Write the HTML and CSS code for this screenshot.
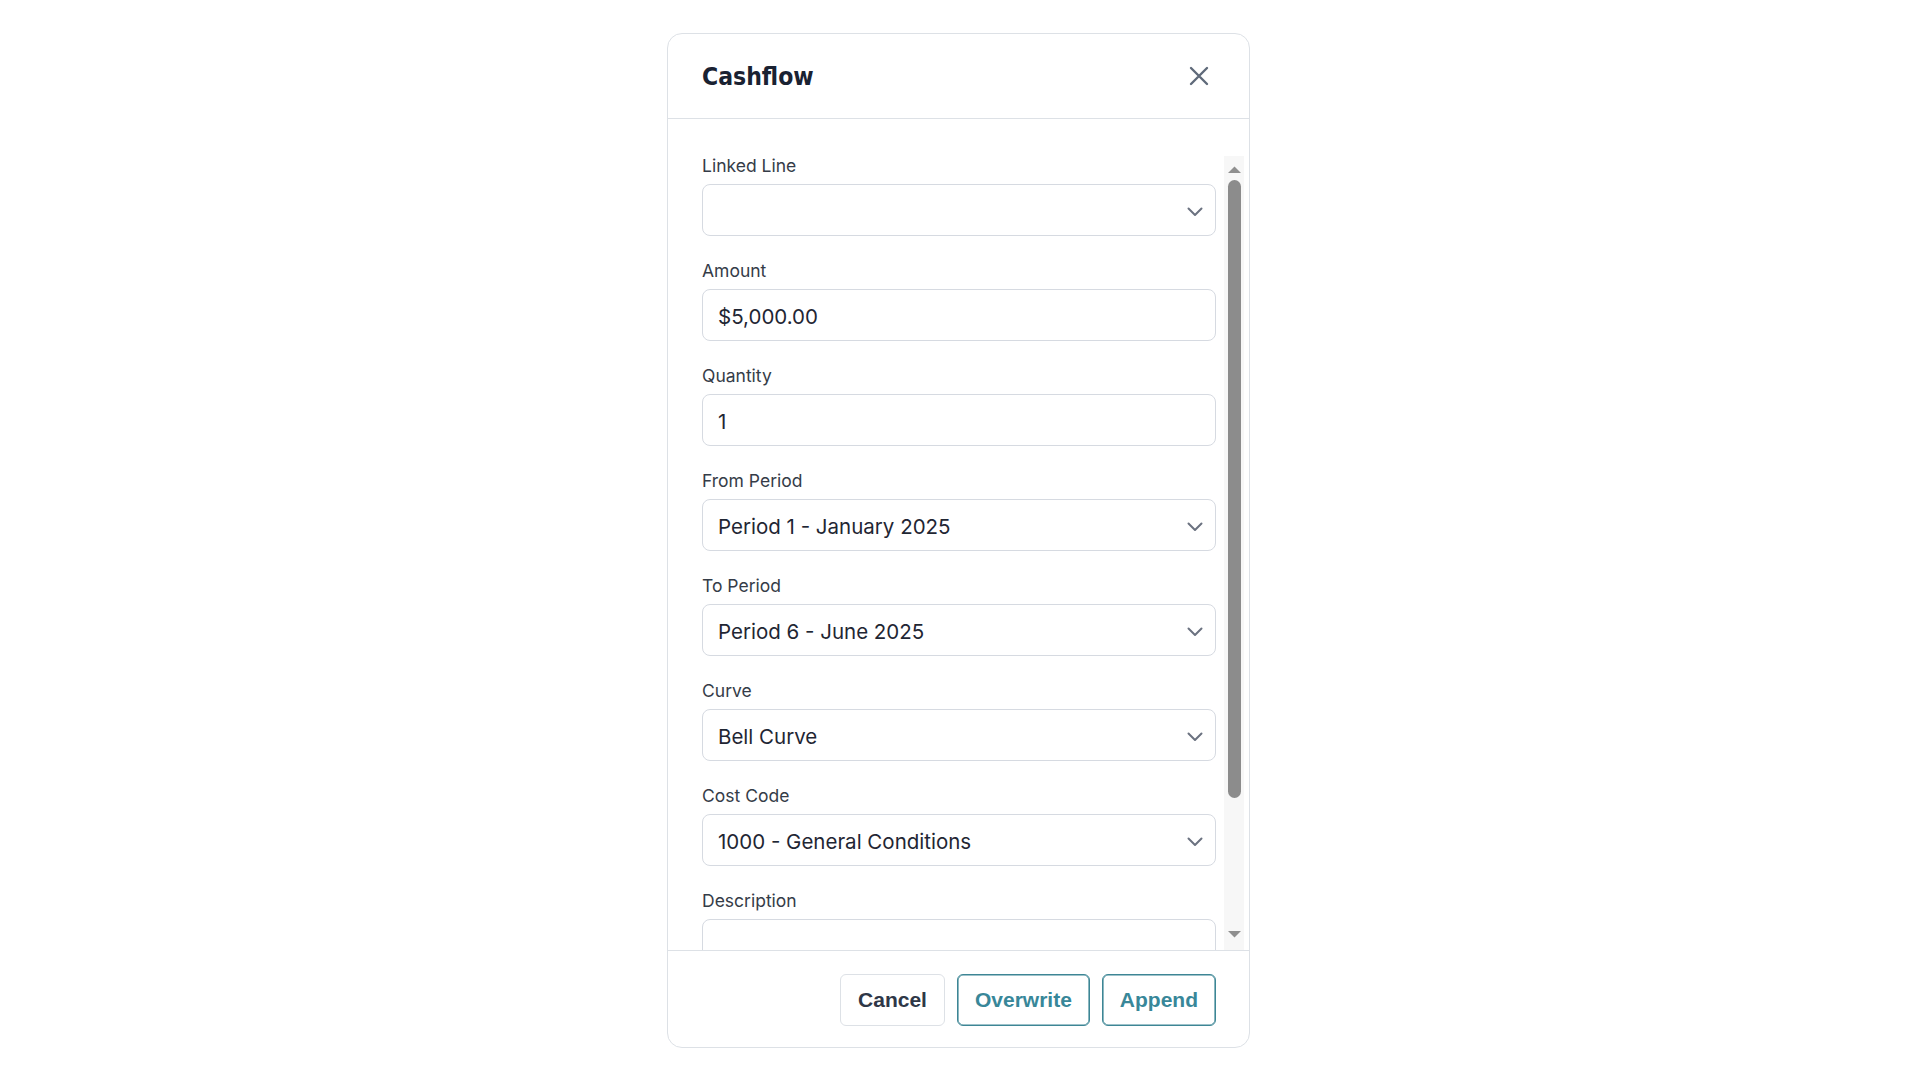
FILE: index.html
```html
<!DOCTYPE html>
<html lang="en">
<head>
<meta charset="utf-8">
<title>Cashflow</title>
<link rel="stylesheet" href="styles.css">
</head>
<body>
<div class="dialog">
  <div class="header">
    <h2 class="title">Cashflow</h2>
    <button class="close" aria-label="Close">
      <svg width="20" height="20" viewBox="0 0 20 20"><path d="M2 2 L18 18 M18 2 L2 18" stroke="#5f6a7a" stroke-width="2.4" stroke-linecap="round" fill="none"/></svg>
    </button>
  </div>
  <div class="body">
    <div class="scroll">
      <div class="field">
        <label class="label">Linked Line</label>
        <div class="control select"><span class="value"></span><svg class="chev" width="16" height="10" viewBox="0 0 16 10"><path d="M1.5 1.5 L8 8 L14.5 1.5" stroke="#6b7280" stroke-width="2" fill="none" stroke-linecap="round" stroke-linejoin="round"/></svg></div>
      </div>
      <div class="field">
        <label class="label">Amount</label>
        <div class="control"><span class="value">$5,000.00</span></div>
      </div>
      <div class="field">
        <label class="label">Quantity</label>
        <div class="control"><span class="value">1</span></div>
      </div>
      <div class="field">
        <label class="label">From Period</label>
        <div class="control select"><span class="value">Period 1 - January 2025</span><svg class="chev" width="16" height="10" viewBox="0 0 16 10"><path d="M1.5 1.5 L8 8 L14.5 1.5" stroke="#6b7280" stroke-width="2" fill="none" stroke-linecap="round" stroke-linejoin="round"/></svg></div>
      </div>
      <div class="field">
        <label class="label">To Period</label>
        <div class="control select"><span class="value">Period 6 - June 2025</span><svg class="chev" width="16" height="10" viewBox="0 0 16 10"><path d="M1.5 1.5 L8 8 L14.5 1.5" stroke="#6b7280" stroke-width="2" fill="none" stroke-linecap="round" stroke-linejoin="round"/></svg></div>
      </div>
      <div class="field">
        <label class="label">Curve</label>
        <div class="control select"><span class="value">Bell Curve</span><svg class="chev" width="16" height="10" viewBox="0 0 16 10"><path d="M1.5 1.5 L8 8 L14.5 1.5" stroke="#6b7280" stroke-width="2" fill="none" stroke-linecap="round" stroke-linejoin="round"/></svg></div>
      </div>
      <div class="field">
        <label class="label">Cost Code</label>
        <div class="control select"><span class="value">1000 - General Conditions</span><svg class="chev" width="16" height="10" viewBox="0 0 16 10"><path d="M1.5 1.5 L8 8 L14.5 1.5" stroke="#6b7280" stroke-width="2" fill="none" stroke-linecap="round" stroke-linejoin="round"/></svg></div>
      </div>
      <div class="field">
        <label class="label">Description</label>
        <div class="control textarea"></div>
      </div>
    </div>
    <div class="vscroll" aria-hidden="true">
      <div class="sb-btn sb-up"><svg width="20" height="24" viewBox="0 0 20 24"><path d="M4 17 L17 17 L10.5 10.5 Z" fill="#8f8f8f"/></svg></div>
      <div class="sb-track"><div class="sb-thumb"></div></div>
      <div class="sb-btn sb-down"><svg width="20" height="24" viewBox="0 0 20 24"><path d="M4 5 L17 5 L10.5 11.5 Z" fill="#8f8f8f"/></svg></div>
    </div>
  </div>
  <div class="footer">
    <button class="btn btn-cancel">Cancel</button>
    <button class="btn btn-outline">Overwrite</button>
    <button class="btn btn-outline">Append</button>
  </div>
</div>
</body>
</html>
```
FILE: styles.css
```css
html, body {
  margin: 0;
  padding: 0;
  background: #ffffff;
}

body {
  font-family: Inter, "Noto Sans", sans-serif;
  color: #1f2937;
}

.dialog {
  box-sizing: border-box;
  width: 583px;
  height: 1015px;
  margin: 33px 0 0 667px;
  border: 1px solid #dde1e6;
  border-radius: 15px;
  display: flex;
  flex-direction: column;
  background: #fff;
}

.header {
  box-sizing: border-box;
  height: 85px;
  flex: 0 0 auto;
  border-bottom: 1px solid #dde1e6;
  display: flex;
  align-items: center;
  justify-content: space-between;
  padding: 0 40px 0 34px;
}

.title {
  margin: 0;
  font-family: "DejaVu Sans Condensed", "DejaVu Sans", sans-serif;
  font-stretch: condensed;
  font-weight: bold;
  font-size: 24.5px;
  color: #1a2232;
}

.close {
  border: 0;
  background: none;
  padding: 0;
  width: 20px;
  height: 20px;
  display: flex;
}

.body {
  flex: 1 1 auto;
  min-height: 0;
  padding-top: 37px;
  display: flex;
}

.scroll {
  flex: 1 1 auto;
  overflow: hidden;
  padding: 0 8px 25px 34px;
  display: flex;
  flex-direction: column;
  gap: 25px;
}

.vscroll {
  flex: 0 0 20px;
  margin-right: 5px;
  background: #f7f7f7;
  display: flex;
  flex-direction: column;
}

.sb-btn {
  flex: 0 0 24px;
  height: 24px;
}

.sb-btn svg {
  display: block;
}

.sb-track {
  flex: 1 1 auto;
}

.sb-thumb {
  height: 618px;
  margin: 0 3px 0 4px;
  background: #8c8c8c;
  border-radius: 7px;
}

.field {
  display: flex;
  flex-direction: column;
  flex: 0 0 auto;
}

.label {
  font-size: 17.5px;
  line-height: 20px;
  color: #353c48;
  margin-bottom: 8px;
}

.control {
  box-sizing: border-box;
  height: 52px;
  border: 1px solid #d6dae1;
  border-radius: 8px;
  display: flex;
  align-items: center;
  justify-content: space-between;
  padding: 0 11px 0 15px;
  background: #fff;
}

.value {
  font-size: 20.5px;
  color: #1f2633;
  white-space: nowrap;
  padding-top: 2px;
}

.chev {
  flex: 0 0 auto;
  margin-top: 4px;
  margin-right: 1px;
}

.textarea {
  height: 168px;
  flex: 0 0 auto;
}

.footer {
  flex: 0 0 auto;
  border-top: 1px solid #dde1e6;
  padding: 23px 33px 21px 0;
  display: flex;
  justify-content: flex-end;
  gap: 12px;
}

.btn {
  box-sizing: border-box;
  height: 52px;
  padding: 0 17px;
  font-family: "Liberation Sans", Arial, sans-serif;
  font-weight: bold;
  font-size: 21px;
  border-radius: 6px;
  background: #fff;
  cursor: pointer;
}

.btn-cancel {
  border: 1px solid #dde1e6;
  color: #2e3747;
}

.btn-outline {
  border: 1px solid #3d8695;
  color: #388799;
  box-shadow: inset 0 0 0 0.6px #3d8695;
}
```
